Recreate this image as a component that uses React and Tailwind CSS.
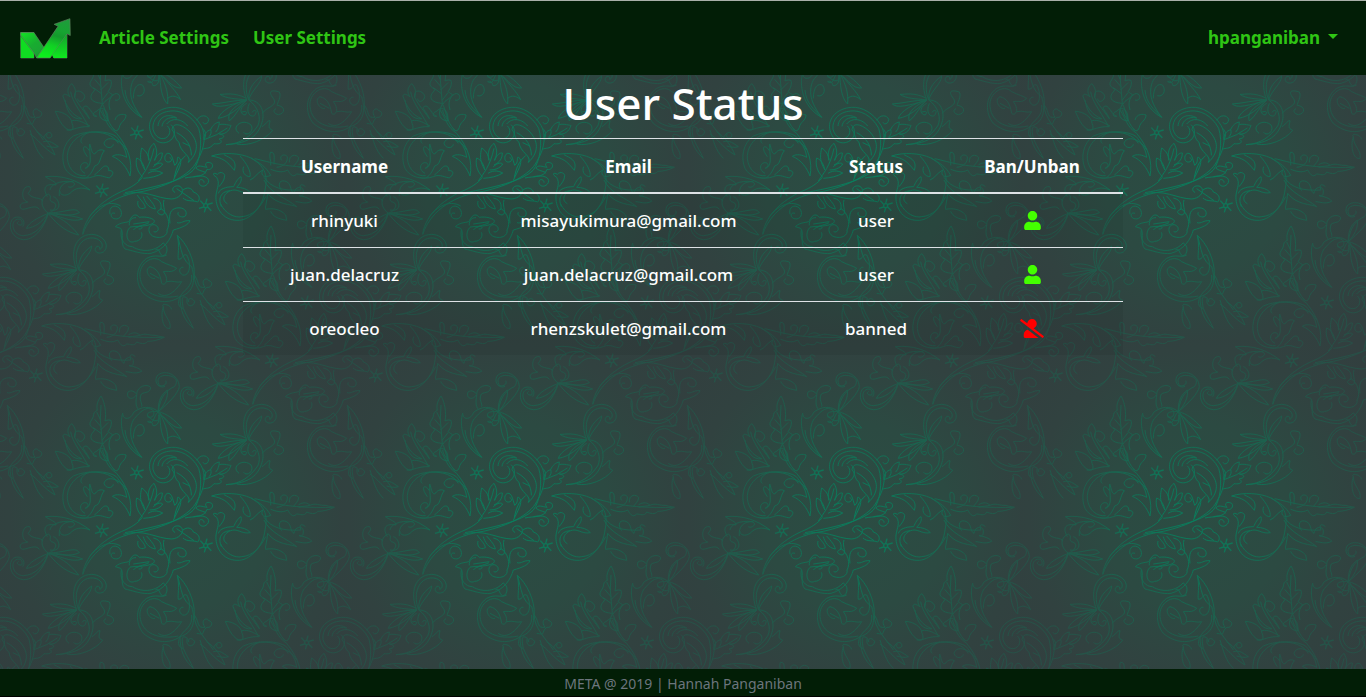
import React from "react";
import { FaUser, FaUserSlash } from "react-icons/fa";

const users = [
  { name: "rhinyuki", email: "misayukimura@gmail.com", status: "user" },
  { name: "juan.delacruz", email: "juan.delacruz@gmail.com", status: "user" },
  { name: "oreocleo", email: "rhenzskulet@gmail.com", status: "banned" },
];

// The motif repeats on a half-drop lattice inside a 1020-unit tile.
const offsets = [
  [0, 0],
  [510, 510],
  [-510, 510],
  [510, -510],
  [-510, -510],
  [1020, 0],
  [-1020, 0],
  [0, 1020],
  [0, -1020],
];

function Star({ x, y }) {
  return (
    <g transform={`translate(${x} ${y})`}>
      <circle r="6" strokeWidth="4" />
      <path d="M0-7L4-21M6-4L21-8M6 4L17 15M0 7L-4 20M-6 4L-20 8M-6-4L-16-15" strokeWidth="4" />
    </g>
  );
}

function Motif() {
  return (
    <g id="motif">
      {/* central spray and its large curl */}
      <path d="M248 703C256 640 320 592 375 570C402 558 420 543 427 532M248 703C275 625 350 585 430 574C505 557 570 525 590 485C618 440 617 400 603 376C580 338 545 320 515 322C470 325 445 355 449 385C455 420 480 436 505 425C528 414 528 385 513 374" />
      <path d="M375 578C460 562 545 545 580 510C600 485 609 425 596 385C575 345 540 330 512 333C475 336 456 360 459 388C466 412 482 420 497 414C511 406 514 388 502 378" />
      <path d="M474 378C476 350 505 338 530 354C505 348 488 362 486 379M500 372C518 350 548 358 563 378M516 389C520 360 555 380 570 396C600 430 592 462 565 487C577 468 540 458 537 427C523 417 526 400 516 389M530 398C560 413 574 438 574 466M548 428L570 438" />
      <path d="M415 543C430 520 450 500 462 445M427 530C410 512 406 493 410 474C425 480 432 495 434 510M434 508C416 480 422 460 425 444C438 452 446 466 447 480M447 482C440 456 450 439 462 430C470 445 474 458 464 480M463 482C470 464 480 458 487 459C487 474 480 487 462 495M460 500C474 487 484 488 488 492C480 506 462 510 449 510M444 520C463 508 478 514 488 519C472 530 452 533 430 535" />
      <path d="M520 541C534 510 548 490 540 476C525 462 540 484 524 496C518 478 515 458 503 460C490 464 492 488 506 486C518 485 516 475 509 473M523 532C529 505 535 485 557 467" />
      <path d="M590 361C600 343 621 344 626 358C626 371 613 376 609 367M608 385C618 395 620 405 612 419L650 404L682 384M612 419C609 405 620 392 632 389C635 397 633 404 627 410M632 389C638 375 647 368 658 366C657 377 655 388 647 396M658 374C672 370 690 377 693 376C688 395 672 404 658 402C676 405 675 414 657 417C671 425 662 434 642 431C628 450 616 442 608 448" />
      <path d="M370 583C430 565 470 596 515 597C545 595 558 566 537 558C518 555 512 572 525 577M412 585C420 600 435 610 436 623C420 632 410 618 414 603M440 588C455 605 463 615 466 627C445 624 434 605 430 590M460 594C485 600 484 616 483 628C468 632 470 642 486 645C503 640 485 620 492 600M530 566L582 602M549 570C560 561 575 562 580 576C602 584 600 600 593 606C580 600 560 606 549 594" />
      <path d="M555 534C580 528 612 535 621 508C632 512 643 500 635 490C620 482 611 492 621 502C608 500 592 493 588 505C601 515 618 514 617 520M580 530C608 524 631 531 625 548C613 568 592 556 598 542C602 535 613 540 612 548" />
      {/* pear-shaped bloom under the spray */}
      <path d="M330 643C325 620 344 612 358 624C372 642 361 661 342 656C328 650 333 635 345 640M268 650C300 610 335 602 362 618M346 680C362 664 384 670 388 662C400 639 410 643 418 652C440 648 475 658 459 670C442 680 412 678 390 681M346 680L362 685C374 700 358 730 375 747C395 751 427 764 453 760C493 749 512 718 520 690C546 683 566 674 570 662C550 660 545 672 531 668M364 690C358 722 378 740 397 740C430 760 470 752 490 728M390 682C372 700 382 735 404 724C421 724 430 708 424 697M388 676C386 660 398 652 408 653M400 690C408 678 430 677 447 668M400 672L448 665M410 683C425 672 434 688 416 687M481 624C505 640 512 670 501 690C505 705 485 718 462 710C442 703 441 673 463 674C482 680 475 700 461 695M510 670C506 640 512 628 530 624C550 620 565 634 556 648C545 656 529 645 535 637M490 730C505 735 505 764 488 768C474 758 480 742 466 750" />
      {/* right flourish */}
      <path d="M635 468C670 456 720 459 753 474C790 496 806 520 795 570C790 620 748 664 711 661C665 660 645 620 648 585C652 560 660 550 650 532C634 522 640 516 652 523C662 512 674 520 674 527C673 542 665 550 657 560M635 468C668 474 680 482 703 511C713 480 690 474 672 464M720 468C740 490 754 515 750 530C736 530 724 516 731 500M655 580C660 562 690 560 701 560C705 550 714 534 723 530C727 544 718 553 710 562C727 562 742 567 751 578C728 582 718 570 702 570C675 572 660 600 682 611M664 620C655 600 658 575 690 572M753 474C780 490 798 500 812 526C795 534 780 528 788 510C770 520 764 535 750 540" />
      <path d="M764 476C810 485 850 506 1003 502M812 496C814 480 806 470 811 457C827 455 822 475 822 493M830 502C850 500 864 488 862 470C850 458 836 470 845 481M868 487C866 462 890 462 896 473C895 485 885 492 880 500M896 494C912 485 922 488 930 496C918 499 908 498 896 502M930 496C945 488 960 497 975 496L1003 502C985 510 970 514 953 514C946 525 930 520 920 516C914 530 900 522 890 522C877 536 868 518 863 510C845 520 829 514 812 508" />
      <path d="M792 532C815 565 850 573 903 570C895 550 908 552 916 560M792 540C810 580 860 595 890 620C875 612 830 616 803 580M845 572C830 552 840 535 862 546C876 558 870 574 882 580M882 580C884 558 912 556 910 576C910 590 901 590 897 586C920 592 932 597 935 604C915 614 900 605 887 605M803 580C800 610 795 620 797 628C815 624 840 626 857 645L860 661C830 655 820 650 812 634M797 590C782 620 760 648 725 650C705 655 675 640 662 612" />
      {/* left flourish */}
      <path d="M390 528C381 505 365 480 337 469C350 460 368 465 380 472C378 445 360 425 349 410C325 391 260 390 220 408C188 430 182 475 195 505C210 534 250 540 280 530C300 520 318 535 329 533C345 520 338 510 326 512C328 498 316 494 308 502C300 510 290 520 283 525M390 528C398 485 386 445 350 400C320 380 320 360 300 330M380 450C365 420 320 402 312 430C318 448 338 445 340 433M202 475C200 430 240 398 275 397C310 395 340 405 355 430M202 475C205 510 230 530 257 527M255 520C235 510 240 490 253 488C270 487 265 505 255 505M257 503C280 500 267 460 269 432C275 445 273 460 284 462C290 454 300 445 313 452C298 470 304 493 284 498C268 535 255 538 240 532M262 470C240 440 254 430 268 452M247 430C237 425 244 404 270 396" />
      <path d="M303 168C291 185 289 200 292 211C283 215 280 220 280 230C276 240 268 246 270 255C276 265 282 265 285 269C277 280 270 284 274 297C283 310 299 307 309 312C314 300 330 298 338 284C328 279 327 276 324 275C333 262 336 252 333 241C322 238 318 242 315 243C320 220 314 185 303 168M303 195L301 240L307 311M302 240L290 216M303 260L284 238M302 270L324 248M303 280L280 263M307 300L324 278M307 312C290 345 300 360 323 363C320 350 310 348 308 330M307 312C320 330 315 360 345 392M324 363C325 320 300 320 290 334C275 338 278 353 290 348M330 330C318 295 345 275 354 282C366 290 356 305 345 300M345 360C350 340 370 342 378 345C378 362 360 366 358 382C353 398 343 392 340 385" />
      <path d="M215 251C200 264 202 280 210 290C195 280 190 281 189 289C200 320 215 345 245 356M215 251C226 262 229 275 224 292C239 320 250 330 268 356M224 292C220 260 254 275 254 290C252 305 234 310 233 296M245 356C220 360 201 340 195 300M212 275C217 305 236 325 265 378M166 334C190 335 215 350 216 370C224 388 215 392 206 390C185 380 175 355 166 334M216 362C236 358 250 368 270 378M200 390C220 392 235 378 268 380M268 356C258 330 238 322 258 318C270 322 273 340 290 350" />
      {/* sprig with an upper curl */}
      <path d="M475 215C480 170 500 150 523 140C536 125 530 107 495 106C472 108 470 125 479 137C493 140 502 131 497 122M475 215C505 190 535 160 538 140C535 100 490 87 471 108C460 130 480 147 495 139M475 215C474 180 485 163 502 150C505 175 493 195 475 215M475 215C500 220 525 240 545 264C525 265 515 255 490 230M480 220C500 260 505 280 503 312C490 300 480 275 480 220M503 295C515 285 528 287 542 299C530 275 505 250 480 220M475 215C452 195 420 200 400 218C396 235 370 245 368 220C358 250 365 320 425 352C400 325 378 310 375 270M425 352C400 320 380 280 400 240C420 215 440 195 460 212C466 226 456 236 442 230M475 215C450 212 430 220 451 235C470 250 480 240 476 225M400 295C400 260 415 248 428 256C440 273 428 292 412 287M475 215C458 230 463 257 443 245C452 242 455 244 459 257C475 259 480 240 476 215" />
      <path d="M413 206C404 190 410 175 410 164C395 185 377 173 384 156C396 148 403 156 410 162C412 138 442 130 452 142C450 160 436 155 424 162C415 180 428 190 425 200" />
      {/* fan sprig with a hooked curl */}
      <path d="M145 640C130 680 105 705 70 707C40 706 30 670 47 660C62 651 70 665 65 675C54 677 48 669 56 664M145 640C130 690 100 720 70 719C28 714 22 665 43 653C65 645 79 664 68 680M145 640C110 655 90 665 79 685C105 682 125 668 145 640M145 640C175 650 205 665 236 705C205 697 175 680 145 640M145 640C175 645 210 670 248 657C220 645 185 646 145 640M145 640C170 635 205 655 238 638C226 620 205 635 145 640M145 640C115 615 125 590 145 582C160 590 140 602 160 607C175 613 165 632 145 640M150 630C190 637 178 595 160 590M136 530C190 525 230 540 270 570M136 530C150 540 170 545 168 555C140 550 125 560 142 590M150 570C150 555 180 540 215 545C235 550 215 567 205 560M118 628C105 605 60 645 60 618C65 605 76 610 83 606C60 600 65 555 88 560C97 565 88 577 84 580C98 600 125 590 128 604" />
      <path d="M178 588C175 560 190 543 220 545M270 570C245 560 225 563 210 580C194 590 180 585 180 574" />
      {/* leafy sprig with a tall curl */}
      <path d="M230 810C210 760 222 705 275 703C315 705 330 740 310 756C292 766 277 750 291 739C300 738 302 746 298 748M236 810C220 770 230 720 270 714C305 711 315 740 300 748M236 810C245 780 275 760 275 738C245 760 235 780 236 810M230 805C190 785 165 794 150 793C170 807 195 805 230 810M230 810C190 810 160 820 127 822C140 835 175 828 230 810M230 810C190 820 150 845 145 865C178 860 205 835 230 810M230 810C190 830 170 850 178 873C200 855 208 830 230 810M236 810C275 810 285 850 276 877C265 915 240 940 168 944M236 810C265 830 275 865 263 888C240 920 215 941 168 944M276 890C290 880 295 870 300 872C298 885 292 895 308 901C285 930 235 950 200 942M207 910C180 890 220 863 243 885C254 905 230 920 221 907M230 820C204 834 212 855 226 855C235 842 224 844 216 846M238 820C222 856 253 868 257 850C262 840 250 838 247 847M277 850C290 830 325 828 310 805C290 780 309 780 328 786C336 800 320 820 322 826C345 828 348 850 325 854C308 850 310 838 318 836" />
      {/* lower hanging flourish */}
      <path d="M532 706C560 730 585 780 583 825C580 860 620 900 640 930M532 706C545 750 545 780 575 800C590 850 575 880 540 890C510 912 465 910 430 880C405 850 405 800 440 775C470 760 480 775 500 765M540 890C550 870 580 860 575 825M532 706C540 745 532 765 535 778C550 778 548 760 560 765C575 790 570 830 548 825C532 815 540 800 550 802M420 830C415 790 460 760 485 785C505 795 520 798 530 805C515 820 505 812 490 815C510 840 495 860 485 850C480 820 470 805 450 800C430 810 450 840 465 835M420 830C425 880 475 900 535 888M450 820L478 835M500 845C520 840 530 850 545 845C530 870 500 900 475 880M583 825C600 850 590 865 615 862C600 840 620 830 626 842C642 845 635 865 620 862C600 880 620 885 590 880M540 890C530 910 538 925 550 925C540 880 555 890 562 895C555 920 580 925 584 905C575 890 563 895 566 906M540 890C540 930 552 960 580 985M550 925C560 950 572 965 580 985M600 900C610 930 615 960 640 985M600 912C622 925 640 955 675 975C665 950 645 920 620 905M640 935C660 930 670 940 685 950C672 955 660 950 650 948M640 925C650 900 668 905 665 920C655 930 645 920 652 912M490 920C480 950 490 990 510 985C515 960 490 950 490 920C480 910 510 910 515 928" />
      <Star x={410} y={398} />
      <Star x={305} y={572} />
      <Star x={617} y={617} />
    </g>
  );
}

function Backdrop() {
  return (
    <svg aria-hidden="true" className="absolute inset-0 h-full w-full">
      <defs>
        <radialGradient id="glow" gradientUnits="userSpaceOnUse" cx="530" cy="530" r="700">
          <stop offset="0" stopColor="#2b4d43" />
          <stop offset="0.4" stopColor="#2c4a42" />
          <stop offset="0.72" stopColor="#314240" />
          <stop offset="1" stopColor="#323f3f" />
        </radialGradient>
        <radialGradient id="fade" gradientUnits="userSpaceOnUse" cx="530" cy="530" r="700">
          <stop offset="0" stopColor="#fff" stopOpacity="0.82" />
          <stop offset="0.25" stopColor="#fff" stopOpacity="0.62" />
          <stop offset="0.45" stopColor="#fff" stopOpacity="0.36" />
          <stop offset="0.7" stopColor="#fff" stopOpacity="0.26" />
          <stop offset="1" stopColor="#fff" stopOpacity="0.22" />
        </radialGradient>
        <mask id="fadeMask" maskUnits="userSpaceOnUse" x="0" y="0" width="1020" height="1020">
          <rect width="1020" height="1020" fill="url(#fade)" />
        </mask>
        <Motif />
        <pattern id="damask" width="1020" height="1020" patternUnits="userSpaceOnUse" patternTransform="scale(0.33333)">
          <rect width="1020" height="1020" fill="url(#glow)" />
          <g mask="url(#fadeMask)" fill="none" stroke="#008a62" strokeWidth="3" strokeLinejoin="round">
            {offsets.map(([x, y]) => (
              <use key={`${x},${y}`} href="#motif" x={x} y={y} />
            ))}
          </g>
        </pattern>
      </defs>
      <rect width="100%" height="100%" fill="url(#damask)" />
    </svg>
  );
}

function Logo() {
  return (
    <svg viewBox="30 23 154 124" className="h-[41px] w-[51px]" role="img" aria-label="META">
      <defs>
        <linearGradient id="side" x1="0" y1="0" x2="0" y2="1">
          <stop offset="0" stopColor="#16a02d" />
          <stop offset="1" stopColor="#0fe81f" />
        </linearGradient>
        <linearGradient id="down" gradientUnits="userSpaceOnUse" x1="45" y1="62" x2="100" y2="140">
          <stop offset="0" stopColor="#12e024" />
          <stop offset="0.5" stopColor="#18ac30" />
          <stop offset="0.75" stopColor="#1aa632" />
          <stop offset="1" stopColor="#129a28" />
        </linearGradient>
        <linearGradient id="up" gradientUnits="userSpaceOnUse" x1="160" y1="25" x2="125" y2="144">
          <stop offset="0" stopColor="#1f9c3c" />
          <stop offset="0.3" stopColor="#17a432" />
          <stop offset="0.45" stopColor="#149a2c" />
          <stop offset="0.7" stopColor="#11d024" />
          <stop offset="1" stopColor="#0cf01c" />
        </linearGradient>
      </defs>
      <g stroke="#5f7d5c" strokeWidth="2" strokeLinejoin="round">
        <path d="M32 67H72V144H32Z" fill="url(#side)" />
        <path d="M172 72V144H132L127 132L142 95Z" fill="url(#side)" />
        <path d="M32 67H72L103 113L80 144L74 132L32 75Z" fill="url(#down)" />
        <path d="M181 25L182 76L172 71L121 144H80L145 48L133 42Z" fill="url(#up)" />
      </g>
      <path d="M32 78L72 134V144H33Z" fill="#10dc22" />
      <path d="M172 73V144H132L127 135Z" fill="url(#side)" />
    </svg>
  );
}

export default function App() {
  return (
    <div className="relative flex min-h-screen flex-col bg-[#2f4541] font-['Noto_Sans',sans-serif] text-white">
      <Backdrop />
      <header className="relative border-t border-[#a9b0a9] bg-[#021e06]">
        <nav className="flex h-[74px] items-center pr-7 pl-5 text-[17px] font-bold text-[#2fc514]">
          <a href="#home" className="mr-7">
            <Logo />
          </a>
          <a href="#articles">Article Settings</a>
          <a href="#users" className="ml-6">User Settings</a>
          <button type="button" className="ml-auto flex items-center gap-2">
            hpanganiban
            <span className="mb-1 border-x-[5px] border-t-[5px] border-x-transparent border-t-[#2fc514]" />
          </button>
        </nav>
      </header>
      <main className="relative mx-auto w-full max-w-[880px] flex-1">
        <h1 className="flex h-[63px] items-center justify-center pb-2 text-[44px] font-medium">User Status</h1>
        <table className="w-full table-fixed border-separate border-spacing-0 text-center text-[17px] font-medium">
          <colgroup>
            <col className="w-[203px]" />
            <col className="w-[365px]" />
            <col className="w-[130px]" />
            <col />
          </colgroup>
          <thead>
            <tr>
              {["Username", "Email", "Status", "Ban/Unban"].map((label) => (
                <th key={label} scope="col" className="h-14 border-t border-b-2 border-[#dee2e6] pt-0.5 font-bold">
                  {label}
                </th>
              ))}
            </tr>
          </thead>
          <tbody className="[&>tr:nth-child(odd)]:bg-black/5 [&>tr+tr>td]:h-[54px] [&>tr+tr>td]:border-t [&>tr+tr>td]:border-[#dee2e6]">
            {users.map((u) => (
              <tr key={u.name}>
                <td className="h-[53px]">{u.name}</td>
                <td>{u.email}</td>
                <td>{u.status}</td>
                <td>
                  {u.status === "banned" ? (
                    <button type="button" aria-label={`Unban ${u.name}`} className="mx-auto block">
                      <FaUserSlash className="h-[19px] w-6 text-[#ff0000]" />
                    </button>
                  ) : (
                    <button type="button" aria-label={`Ban ${u.name}`} className="mx-auto block">
                      <FaUser className="h-[19px] w-[17px] text-[#44ff00]" />
                    </button>
                  )}
                </td>
              </tr>
            ))}
          </tbody>
        </table>
      </main>
      <footer className="relative flex h-7 items-center justify-center border-b border-black bg-[#021e06] pt-0.5 text-sm text-[#6c757d]">
        META @ 2019 | Hannah Panganiban
      </footer>
    </div>
  );
}
